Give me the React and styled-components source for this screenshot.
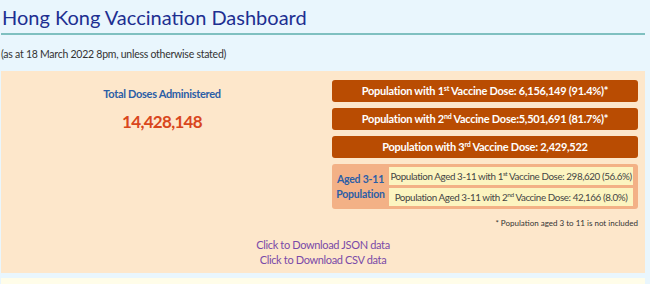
import styled, { createGlobalStyle } from 'styled-components';

const GlobalStyle = createGlobalStyle`
	body {
		margin: 0;
		background: #e9f6fd;
		font-family: Lato, "Noto Sans", sans-serif;
	}
`;

const doses = [
	{ n: '1', sup: 'st', text: ' Vaccine Dose: 6,156,149 (91.4%)*' },
	{ n: '2', sup: 'nd', text: ' Vaccine Dose:5,501,691 (81.7%)*' },
	{ n: '3', sup: 'rd', text: ' Vaccine Dose: 2,429,522' },
];

const kids = [
	{ n: '1', sup: 'st', text: ' Vaccine Dose: 298,620 (56.6%)' },
	{ n: '2', sup: 'nd', text: ' Vaccine Dose: 42,166 (8.0%)' },
];

const App = () => {
	return (
		<S.Page>
			<GlobalStyle />
			<S.Title>Hong Kong Vaccination Dashboard</S.Title>
			<S.Note>(as at 18 March 2022 8pm, unless otherwise stated)</S.Note>
			<S.Panel>
				<S.Columns>
					<S.Left>
						<S.Label>Total Doses Administered</S.Label>
						<S.Total>14,428,148</S.Total>
					</S.Left>
					<S.Right>
						{doses.map((d, idx) => (
							<S.DoseBar key={idx}>
								Population with {d.n}
								<sup>{d.sup}</sup>
								{d.text}
							</S.DoseBar>
						))}
						<S.AgedBox>
							<S.AgedLabel>
								Aged 3-11
								<br />
								Population
							</S.AgedLabel>
							<S.AgedList>
								{kids.map((k, idx) => (
									<S.AgedItem key={idx}>
										Population Aged 3-11 with {k.n}
										<sup>{k.sup}</sup>
										{k.text}
									</S.AgedItem>
								))}
							</S.AgedList>
						</S.AgedBox>
						<S.Footnote>* Population aged 3 to 11 is not included</S.Footnote>
					</S.Right>
				</S.Columns>
				<S.Links>
					<S.Link>Click to Download JSON data</S.Link>
					<S.Link>Click to Download CSV data</S.Link>
				</S.Links>
			</S.Panel>
			<S.NextPanel />
		</S.Page>
	);
};
export default App;

const Page = styled.div`
	width: 650px;
	height: 284px;
	overflow: hidden;
	padding: 0 5px 0 1px;
	box-sizing: border-box;
`;

const Title = styled.h1`
	margin: 0;
	padding: 6px 0 5px 1px;
	font-size: 20px;
	font-weight: 400;
	color: #1d2f91;
	line-height: 22px;
	border-bottom: 2px solid #7fc0c0;
`;

const Note = styled.div`
	margin: 11px 0 0;
	font-size: 10.5px;
	letter-spacing: -0.25px;
	color: #333;
	line-height: 16px;
`;

const Panel = styled.div`
	margin-top: 9px;
	background: #fde7cb;
	height: 202px;
	display: flex;
	flex-direction: column;
`;

const Columns = styled.div`
	display: grid;
	grid-template-columns: 322px 1fr;
`;

const Left = styled.div`
	display: flex;
	flex-direction: column;
	align-items: center;
	padding-top: 16px;
`;

const Label = styled.div`
	font-size: 11px;
	letter-spacing: -0.3px;
	font-weight: 700;
	color: #2b5ea6;
	line-height: 14px;
`;

const Total = styled.div`
	margin-top: 10px;
	font-size: 17px;
	letter-spacing: -0.7px;
	font-weight: 700;
	color: #d9461c;
	line-height: 22px;
`;

const Right = styled.div`
	padding: 9px 7px 0 9px;
	display: flex;
	flex-direction: column;
	gap: 6px;
	min-width: 0;
`;

const DoseBar = styled.div`
	background: #b94c02;
	color: #fff;
	border-radius: 3px;
	height: 22px;
	line-height: 22px;
	text-align: center;
	white-space: nowrap;
	font-size: 11px;
	letter-spacing: -0.25px;
	font-weight: 700;

	sup {
		font-size: 7px;
		line-height: 0;
		vertical-align: 4px;
	}
`;

const AgedBox = styled.div`
	background: #f3b186;
	border-radius: 3px;
	display: flex;
	align-items: center;
	padding: 3px 5px 3px 0;
`;

const AgedLabel = styled.div`
	width: 57px;
	flex: none;
	text-align: center;
	font-size: 10.5px;
	letter-spacing: -0.2px;
	font-weight: 700;
	color: #2b5ea6;
	line-height: 15px;
`;

const AgedList = styled.div`
	flex: 1;
	min-width: 0;
	display: flex;
	flex-direction: column;
	gap: 3px;
`;

const AgedItem = styled.div`
	background: #fcf4c0;
	height: 18px;
	line-height: 18px;
	text-align: center;
	white-space: nowrap;
	overflow: hidden;
	font-size: 9.8px;
	letter-spacing: -0.4px;
	color: #444;

	sup {
		font-size: 6.5px;
		line-height: 0;
		vertical-align: 4px;
	}
`;

const Footnote = styled.div`
	text-align: right;
	font-size: 8px;
	color: #333;
	margin-top: 2px;
	line-height: 12px;
`;

const Links = styled.div`
	margin-top: 8px;
	display: flex;
	flex-direction: column;
	align-items: center;
`;

const Link = styled.a`
	font-size: 11px;
	letter-spacing: -0.35px;
	line-height: 15px;
	color: #7a4aa8;
	cursor: pointer;
`;

const NextPanel = styled.div`
	margin-top: 5px;
	height: 20px;
	background: #fffde9;
`;

const S = {
	Page,
	Title,
	Note,
	Panel,
	Columns,
	Left,
	Label,
	Total,
	Right,
	DoseBar,
	AgedBox,
	AgedLabel,
	AgedList,
	AgedItem,
	Footnote,
	Links,
	Link,
	NextPanel,
};
